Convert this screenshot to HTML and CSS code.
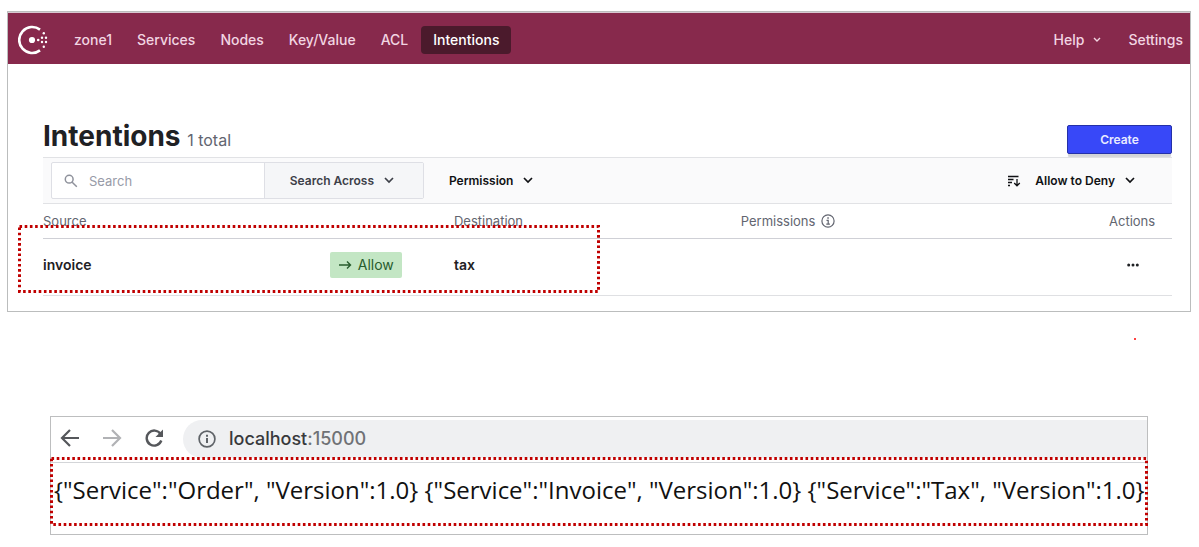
FILE: index.html
```html
<!DOCTYPE html>
<html lang="en">
<head>
<meta charset="utf-8">
<title>Intentions</title>
<link rel="stylesheet" href="styles.css">
</head>
<body>
<section class="console">
  <header class="topbar">
    <a class="logo" href="#" aria-label="Home">
      <svg width="30" height="30" viewBox="0 0 30 30" fill="#fff">
        <path d="M22 4.600A13 13 0 1 0 22 25.400" fill="none" stroke="#fff" stroke-width="2.600"/>
        <circle cx="14" cy="15" r="3.100"/>
        <circle cx="20.200" cy="15" r="1.300"/>
        <circle cx="24" cy="12.800" r="1.200"/><circle cx="24" cy="17" r="1.200"/>
        <circle cx="28" cy="12.800" r="1.200"/><circle cx="28" cy="17" r="1.200"/>
        <circle cx="25.800" cy="8.300" r="1.200"/><circle cx="25.800" cy="21.700" r="1.200"/>
      </svg>
    </a>
    <nav class="nav">
      <a href="#">zone1</a>
      <a href="#">Services</a>
      <a href="#">Nodes</a>
      <a href="#">Key/Value</a>
      <a href="#">ACL</a>
      <a href="#" class="active">Intentions</a>
    </nav>
    <nav class="nav nav-end">
      <button type="button" class="help">Help
        <svg width="8" height="6" viewBox="0 0 8 6"><path d="M1 1l3 3 3-3" fill="none" stroke="currentColor" stroke-width="1.400"/></svg>
      </button>
      <a href="#">Settings</a>
    </nav>
  </header>
  <main class="content">
    <div class="heading">
      <h1>Intentions <span class="total">1 total</span></h1>
      <button type="button" class="create">Create</button>
    </div>
    <div class="toolbar">
      <div class="search">
        <label class="search-field">
          <svg width="14" height="14" viewBox="0 0 14 14" fill="none" stroke="#8e919b" stroke-width="1.500"><circle cx="5.200" cy="5.200" r="3.900"/><path d="M8.200 8.200l4.600 4.600"/></svg>
          <input type="text" placeholder="Search" aria-label="Search">
        </label>
        <button type="button" class="across">Search Across
          <svg width="10" height="7" viewBox="0 0 10 7"><path d="M1 1l4 4 4-4" fill="none" stroke="currentColor" stroke-width="1.700"/></svg>
        </button>
      </div>
      <button type="button" class="filter">Permission
        <svg width="10" height="7" viewBox="0 0 10 7"><path d="M1 1l4 4 4-4" fill="none" stroke="currentColor" stroke-width="1.700"/></svg>
      </button>
      <button type="button" class="filter sort">
        <svg class="sort-icon" width="14" height="12" viewBox="0 0 14 12" fill="none" stroke="currentColor" stroke-width="1.300"><path d="M1 1.500h10.500M1 4.500h5.500M1 7.500h4M1 10.500h2M10 4v6.500M7.200 8l2.800 2.800L12.800 8"/></svg>
        Allow to Deny
        <svg width="10" height="7" viewBox="0 0 10 7"><path d="M1 1l4 4 4-4" fill="none" stroke="currentColor" stroke-width="1.700"/></svg>
      </button>
    </div>
    <div class="table-wrap">
      <table class="intentions">
        <colgroup><col class="c-source"><col class="c-rule"><col class="c-dest"><col><col class="c-actions"></colgroup>
        <thead>
          <tr><th>Source</th><th></th><th>Destination</th>
          <th>Permissions <svg class="info" width="14" height="14" viewBox="0 0 14 14" fill="none" stroke="currentColor" stroke-width="1.200"><circle cx="7" cy="7" r="6.100"/><path d="M5.500 6.300h1.700v4M5.300 10.200h3.600"/><path d="M6.300 3.900h1.500" stroke-width="1.500"/></svg></th>
          <th>Actions</th></tr>
        </thead>
        <tbody>
          <tr><td>invoice</td>
          <td><span class="allow"><svg width="13" height="10" viewBox="0 0 13 10"><path d="M0 5h11.500M8 1.500L11.500 5 8 8.500" fill="none" stroke="currentColor" stroke-width="1.400"/></svg>Allow</span></td>
          <td>tax</td><td></td>
          <td><button type="button" class="more" aria-label="More"><svg width="12" height="4" viewBox="0 0 12 4" fill="currentColor"><circle cx="1.700" cy="2" r="1.500"/><circle cx="6" cy="2" r="1.500"/><circle cx="10.300" cy="2" r="1.500"/></svg></button></td></tr>
        </tbody>
      </table>
      <svg class="marker marker-row"><rect x="1.500" y="1.500" width="100%" height="100%"/></svg>
    </div>
  </main>
</section>
<div class="spacer"><span class="speck"></span></div>
<section class="browser">
  <div class="browser-bar">
    <div class="browser-buttons">
      <button type="button" aria-label="Back"><svg width="20" height="18" viewBox="0 0 20 18" fill="none" stroke="#55575b" stroke-width="2.200"><path d="M19 9H2M10 1L2 9l8 8"/></svg></button>
      <button type="button" aria-label="Forward"><svg width="20" height="18" viewBox="0 0 20 18" fill="none" stroke="#b1b2b5" stroke-width="2.200"><path d="M1 9h17M10 1l8 8-8 8"/></svg></button>
      <button type="button" aria-label="Reload"><svg width="20" height="18" viewBox="0 0 20 18"><path d="M16.500 5A7.500 7.500 0 1 0 17.300 11.500" fill="none" stroke="#55575b" stroke-width="2.400"/><path d="M19 .5v7.500h-7.500z" fill="#55575b"/></svg></button>
    </div>
    <div class="address">
      <svg width="18" height="18" viewBox="0 0 18 18" fill="none" stroke="#5f6368" stroke-width="1.700"><circle cx="9" cy="9" r="7.900"/><path d="M9 8v5M9 4.700v2" stroke-width="2"/></svg>
      <span>localhost<span class="port">:15000</span></span>
    </div>
  </div>
  <p class="response">{"Service":"Order", "Version":1.0} {"Service":"Invoice", "Version":1.0} {"Service":"Tax", "Version":1.0}</p>
  <svg class="marker marker-response"><rect x="1.500" y="1.500" width="100%" height="100%"/></svg>
</section>
</body>
</html>
```

FILE: styles.css
```css
* { box-sizing: border-box; }
body { margin: 0; padding: 11px 8px 12px; background: #fff; color: #1f2124; font: 14px/20px Inter, sans-serif; }
button { margin: 0; padding: 0; border: 0; background: none; color: inherit; font: inherit; }
a { color: inherit; text-decoration: none; }
svg { display: block; flex: none; }

.console { border: 1px solid #bbbdbd; margin-left: -1px; }
.topbar { display: flex; align-items: center; height: 52px; padding: 2px 7px 0 10px; border-top: 1px solid #d8c8d0; background: #87294c; color: #f2d5e2; font-weight: 500; }
.nav { display: flex; align-items: center; gap: 1px; margin-left: 14px; }
.nav a, .help { padding: 4px 12px; border-radius: 4px; }
.nav .active { background: #4b1a2c; color: #fff; }
.nav-end { gap: 3px; margin-left: auto; }
.nav-end a:last-child { padding-right: 0; }
.help { display: flex; align-items: center; gap: 9px; }

.content { padding: 56px 18px 15px 35px; }
.heading { display: flex; justify-content: space-between; align-items: flex-start; height: 37px; }
h1 { margin: 0; font-size: 28px; line-height: 33px; font-weight: 700; }
.total { color: #626570; font-size: 16px; font-weight: 400; }
.create { width: 105px; height: 29px; margin-top: 5px; border: 1px solid #2430a8; border-radius: 2px; background: #3848f8; color: #e8eaff; font-size: 12px; font-weight: 600; box-shadow: 0 4px 1px -1px #d3d4d8; }
.toolbar { display: flex; align-items: center; height: 47px; padding: 0 37px 0 8px; border: solid #e1e2e5; border-width: 1px 0; background: #fafafb; font-size: 12px; font-weight: 600; }
.search { display: flex; width: 34.400%; height: 37px; border: 1px solid #dedfe5; border-radius: 2px; background: #fff; }
.search-field { display: flex; flex: 1; align-items: center; gap: 11px; padding-left: 12px; }
.search input { width: 100%; min-width: 0; padding: 0; border: 0; outline: 0; background: none; font: 400 13px/20px Inter, sans-serif; }
.search input::placeholder { color: #989ba8; opacity: 1; }
.across, .filter { display: flex; align-items: center; gap: 10px; }
.across { justify-content: center; width: 159px; padding-right: 4px; border-left: 1px solid #dedfe5; background: #f5f6f8; color: #3d4048; }
.filter { margin-left: 25px; color: #101114; }
.sort { margin-left: auto; }
.sort-icon { margin-right: 4px; }

.table-wrap { position: relative; }
.intentions { width: 100%; border-collapse: collapse; table-layout: fixed; }
.c-source { width: 25.400%; }
.c-rule { width: 11%; }
.c-dest { width: 25.400%; }
.c-actions { width: 63px; }
th, td { padding: 0; text-align: left; }
th { height: 34px; border-bottom: 1px solid #cfd0d6; color: #626570; font-size: 13px; font-weight: 400; }
td { height: 57px; padding-bottom: 3px; border-bottom: 1px solid #dfe0e3; font-weight: 600; }
.info { display: inline-block; margin-left: 2px; vertical-align: -2px; }
.allow { display: inline-flex; align-items: center; gap: 6px; height: 26px; padding: 0 8px 0 9px; border-radius: 2px; background: #c3e6c4; color: #285c2d; font-weight: 400; vertical-align: middle; }
.more { display: block; margin-left: 18px; }

.marker { position: absolute; overflow: visible; pointer-events: none; }
.marker rect { fill: none; stroke: #c00000; stroke-width: 3; stroke-dasharray: 2.6 2.6; }
.marker-row { left: -25px; top: 21px; width: 579px; height: 65px; }

.spacer { display: flex; justify-content: flex-end; height: 104px; padding: 26px 55px 0 0; }
.speck { width: 2px; height: 2px; border-radius: 50%; background: #f00; }

.browser { position: relative; margin: 0 43px 0 42px; border: 1px solid #bdbebf; }
.browser-bar { display: flex; height: 46px; padding-top: 3px; border-bottom: 1px solid #d3d5d8; }
.browser-buttons { display: flex; align-items: center; gap: 22px; width: 132px; height: 37px; padding-left: 9px; }
.address { display: flex; flex: 1; align-items: center; gap: 13px; height: 38px; padding-left: 15px; border-radius: 19px 0 0 19px; background: #eff0f2; color: #38393c; font: 500 18px/24px Inter, sans-serif; }
.port { color: #707276; }
.response { margin: 0; padding: 9px 3px 26px; color: #111; font: 24px/36px "Open Sans", sans-serif; white-space: nowrap; }
.marker-response { left: -1px; top: 40px; width: calc(100% - 1px); height: 66px; }
```
